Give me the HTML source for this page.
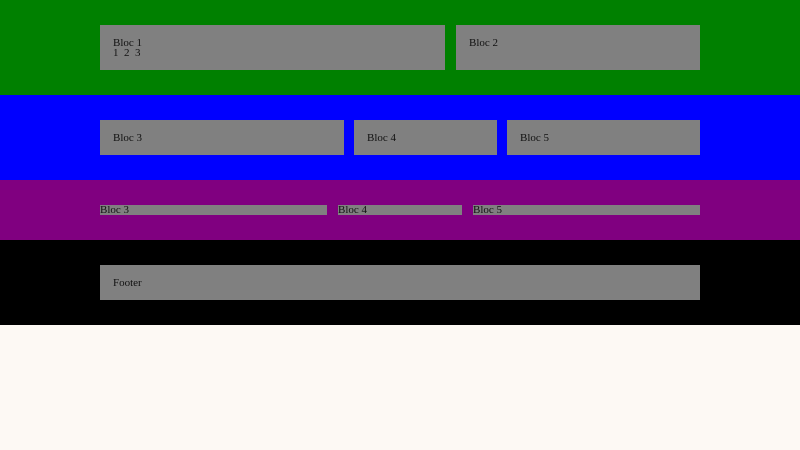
<!DOCTYPE html>
<html><head><style>
html,body{margin:0;padding:0;width:800px;height:450px;background:#fdf9f4;overflow:hidden;font-family:"Liberation Serif",serif;font-size:11px;line-height:10px;color:#111}
.s{position:absolute;left:0;width:800px}
.b{position:absolute;background:#808080;box-sizing:border-box}
.p{padding:13px 13px}
</style></head><body>
<div class="s" style="top:0;height:95px;background:#008000"></div>
<div class="s" style="top:95px;height:85px;background:#0000ff"></div>
<div class="s" style="top:180px;height:60px;background:#800080"></div>
<div class="s" style="top:240px;height:85px;background:#000"></div>

<div class="b p" style="left:100px;top:25px;width:345px;height:45px">Bloc 1<br>1&nbsp;&nbsp;2&nbsp;&nbsp;3</div>
<div class="b p" style="left:456px;top:25px;width:244px;height:45px">Bloc 2</div>

<div class="b p" style="left:100px;top:120px;width:244px;height:35px">Bloc 3</div>
<div class="b p" style="left:354px;top:120px;width:143px;height:35px">Bloc 4</div>
<div class="b p" style="left:507px;top:120px;width:193px;height:35px">Bloc 5</div>

<div class="b" style="left:100px;top:205px;width:227px;height:10px;line-height:10px">Bloc 3</div>
<div class="b" style="left:338px;top:205px;width:124px;height:10px;line-height:10px">Bloc 4</div>
<div class="b" style="left:473px;top:205px;width:227px;height:10px;line-height:10px">Bloc 5</div>

<div class="b p" style="left:100px;top:265px;width:600px;height:35px">Footer</div>
</body></html>
